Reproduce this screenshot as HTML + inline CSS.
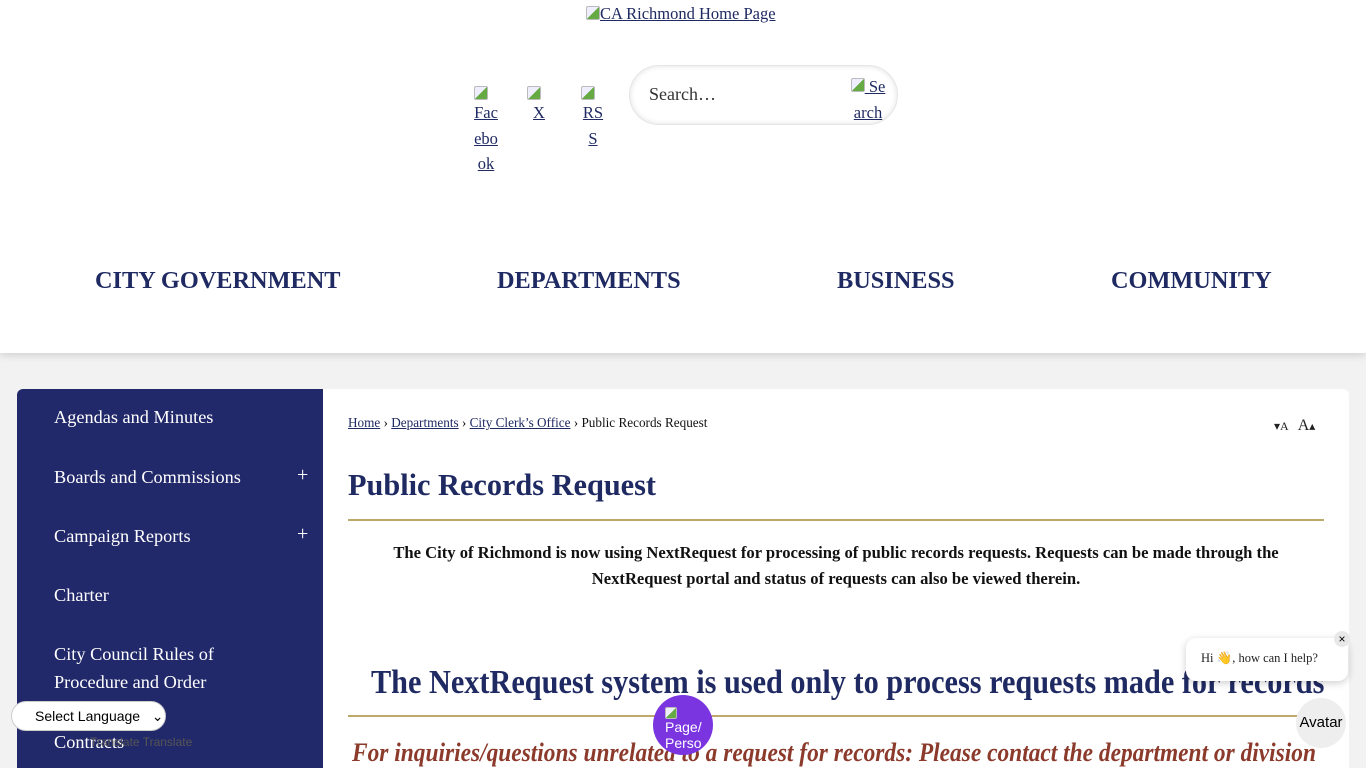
<!DOCTYPE html>
<html><head><meta charset="utf-8">
<style>
*{margin:0;padding:0;box-sizing:border-box}
body{width:1366px;height:768px;overflow:hidden;background:#f2f2f2;font-family:"Liberation Serif",serif;position:relative}
a{color:#1f2a62;text-decoration:underline}
.hdr{position:absolute;left:0;top:0;width:1366px;height:353px;background:#fff;box-shadow:0 2px 8px rgba(0,0,0,.15)}
.abs{position:absolute}
.soc{position:absolute;font-size:16.5px;line-height:25.5px;text-align:center;color:#1f2a62;text-decoration:underline}
.ic{display:block;width:14px;height:14px;margin:0 auto 0 0;border:1px solid #bbb;border-radius:2px;background:linear-gradient(135deg,#eef 50%,#6a4 50%)}
.search{position:absolute;left:629px;top:65px;width:269px;height:60px;border-radius:30px;border:1px solid #e5e5e5;box-shadow:inset 0 0 6px rgba(0,0,0,.12);background:#fff}
.nav{position:absolute;top:267px;font-size:24.3px;font-weight:bold;color:#1f2a62}
.side{position:absolute;left:17px;top:389px;width:306px;height:379px;background:#22296a;border-radius:6px 0 0 0}
.side div{position:absolute;left:37px;color:#fff;font-size:18.3px;line-height:28px}
.plus{position:absolute;left:280px;color:#fff;font-size:20px}
.main{position:absolute;left:323px;top:389px;width:1026px;height:379px;background:#fff;border-radius:0 6px 0 0}
</style></head><body>
<div class="hdr">
 <a class="abs" style="left:586px;top:4px;font-size:16.5px"><span class="ic" style="display:inline-block;vertical-align:-1px;margin:0"></span>CA Richmond Home Page</a>
 <div class="soc" style="left:474px;top:86px;width:24px"><span class="ic"></span>Fac<br>ebo<br>ok</div>
 <div class="soc" style="left:527px;top:86px;width:24px"><span class="ic"></span>X</div>
 <div class="soc" style="left:581px;top:86px;width:24px"><span class="ic"></span>RS<br>S</div>
 <div class="search"></div>
 <div class="abs" style="left:649px;top:84px;font-size:18px;color:#333">Search…</div>
 <div class="soc" style="left:848px;top:74px;width:40px"><span class="ic" style="display:inline-block;margin:0"></span> Se<br>arch</div>
 <div class="nav" style="left:95px">CITY GOVERNMENT</div>
 <div class="nav" style="left:497px">DEPARTMENTS</div>
 <div class="nav" style="left:837px">BUSINESS</div>
 <div class="nav" style="left:1111px">COMMUNITY</div>
</div>
<div class="side">
 <div style="top:14px">Agendas and Minutes</div>
 <div style="top:74px">Boards and Commissions</div><span class="plus" style="top:75px">+</span>
 <div style="top:133px">Campaign Reports</div><span class="plus" style="top:134px">+</span>
 <div style="top:192px">Charter</div>
 <div style="top:251px">City Council Rules of<br>Procedure and Order</div>
 <div style="top:339px">Contracts</div>
</div>
<div class="main">
 <div class="abs" style="left:25px;top:26px;font-size:13.2px;color:#111"><a>Home</a> › <a>Departments</a> › <a>City Clerk’s Office</a> › Public Records Request</div>
 <div class="abs" style="left:951px;top:28px;font-size:12px;color:#222">▾A&nbsp;&nbsp; <span style="font-size:16px">A</span>▴</div>
 <div class="abs" style="left:25px;top:79px;font-size:30.3px;font-weight:bold;color:#1f2a62">Public Records Request</div>
 <div class="abs" style="left:25px;top:130px;width:976px;height:2px;background:#bfa96a"></div>
 <div class="abs" style="left:25px;top:151px;width:976px;text-align:center;font-size:16.6px;font-weight:bold;line-height:26px;color:#111">The City of Richmond is now using NextRequest for processing of public records requests. Requests can be made through the<br>NextRequest portal and status of requests can also be viewed therein.</div>
 <div class="abs" style="left:48px;top:275px;width:953px;height:42px;overflow:hidden;white-space:nowrap"><span style="display:inline-block;font-size:34px;font-weight:bold;color:#1f2a62;transform:scaleX(0.89);transform-origin:left">The NextRequest system is used only to process requests made for records</span></div>
 <div class="abs" style="left:25px;top:326px;width:976px;height:2px;background:#bfa96a"></div>
 <div class="abs" style="left:29px;top:349px;width:972px;overflow:hidden;white-space:nowrap"><span style="display:inline-block;font-size:26px;font-weight:bold;font-style:italic;color:#8b3a2b;transform:scaleX(0.9);transform-origin:left">For inquiries/questions unrelated to a request for records: Please contact the department or division</span></div>
</div>
<div class="abs" style="left:11px;top:701px;width:155px;height:30px;background:#fff;border-radius:15px;border:1px solid #ccc;font-family:'Liberation Sans',sans-serif;font-size:14px;padding:6px 0 0 23px">Select Language&nbsp;&nbsp; ⌄</div>
<div class="abs" style="left:90px;top:735px;font-family:'Liberation Sans',sans-serif;font-size:12px;color:#555">Translate Translate</div>
<div class="abs" style="left:653px;top:695px;width:60px;height:60px;border-radius:50%;background:#7b35e0;color:#fff;font-family:'Liberation Sans',sans-serif;font-size:14px;line-height:16px;padding:12px 0 0 12px;overflow:hidden"><span class="ic" style="width:12px;height:12px"></span>Page/<br>Perso</div>
<div class="abs" style="left:1186px;top:638px;width:162px;height:43px;background:#fff;border-radius:10px;box-shadow:0 2px 8px rgba(0,0,0,.2);font-size:12.5px;padding:13px 0 0 15px;color:#222">Hi 👋, how can I help?</div>
<div class="abs" style="left:1334px;top:631px;width:16px;height:16px;border-radius:50%;background:#e8e8e8;font-size:12px;text-align:center;line-height:16px;font-family:'Liberation Sans',sans-serif">×</div>
<div class="abs" style="left:1296px;top:698px;width:50px;height:50px;border-radius:50%;background:#eee;font-family:'Liberation Sans',sans-serif;font-size:15px;line-height:50px;text-align:center;white-space:nowrap">Avatar</div>
</body></html>
